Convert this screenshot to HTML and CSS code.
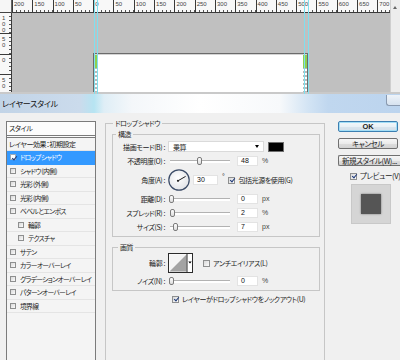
FILE: index.html
```html
<!DOCTYPE html>
<html lang="ja">
<head>
<meta charset="utf-8">
<title>レイヤースタイル</title>
<link rel="stylesheet" href="styles.css">
</head>
<body>
<div class="ws">
  <div class="corner"></div>
  <div class="hruler">
    <span class="seg">200</span><span class="seg">150</span><span class="seg">100</span><span class="seg">50</span><span class="seg">0</span><span class="seg">50</span><span class="seg">100</span><span class="seg">150</span><span class="seg">200</span><span class="seg">250</span><span class="seg">300</span><span class="seg">350</span><span class="seg">400</span><span class="seg">450</span><span class="seg">500</span><span class="seg">550</span><span class="seg">600</span><span class="seg">650</span><span class="seg">700</span>
  </div>
  <div class="vscroll"><span class="arrow-up"></span></div>
  <div class="vruler">
    <span class="vseg"><i>1</i><i>0</i><i>0</i></span>
    <span class="vseg"><i>5</i><i>0</i></span>
    <span class="vseg"><i>0</i></span>
    <span class="vseg"><i>5</i><i>0</i></span>
  </div>
  <div class="canvas">
    <div class="doc">
      <span class="mark mark-l"></span>
      <span class="mark mark-r"></span>
    </div>
  </div>
  <span class="guide g1"></span>
  <span class="guide g2"></span>
  <span class="guide g3"></span>
  <span class="guide g4"></span>
</div>

<div class="titlebar">
  <span class="title">レイヤースタイル</span>
  <span class="close"></span>
</div>

<div class="dialog">
  <div class="styles">
    <div class="list">
      <div class="lhead">スタイル</div>
      <div class="lrow lplain">レイヤー効果：初期設定</div>
      <div class="lrow sel"><span class="cb on"></span><span>ドロップシャドウ</span></div>
      <div class="lrow"><span class="cb"></span><span>シャドウ (内側)</span></div>
      <div class="lrow"><span class="cb"></span><span>光彩 (外側)</span></div>
      <div class="lrow"><span class="cb"></span><span>光彩 (内側)</span></div>
      <div class="lrow"><span class="cb"></span><span>ベベルとエンボス</span></div>
      <div class="lrow ind"><span class="cb"></span><span>輪郭</span></div>
      <div class="lrow ind"><span class="cb"></span><span>テクスチャ</span></div>
      <div class="lrow"><span class="cb"></span><span>サテン</span></div>
      <div class="lrow"><span class="cb"></span><span>カラーオーバーレイ</span></div>
      <div class="lrow"><span class="cb"></span><span>グラデーションオーバーレイ</span></div>
      <div class="lrow"><span class="cb"></span><span>パターンオーバーレイ</span></div>
      <div class="lrow"><span class="cb"></span><span>境界線</span></div>
    </div>
  </div>

  <div class="main">
    <fieldset class="grp outer">
      <legend>ドロップシャドウ</legend>
      <fieldset class="grp inner struct">
        <legend>構造</legend>
        <div class="row r1">
          <span class="lbl">描画モード(B) :</span>
          <span class="select"><span>乗算</span><span class="caret"></span></span>
          <span class="swatch"></span>
        </div>
        <div class="row r2">
          <span class="lbl">不透明度(O) :</span>
          <span class="slider"><span class="thumb" style="left:29px"></span></span>
          <span class="field">48</span><span class="unit">%</span>
        </div>
        <div class="row r3">
          <span class="lbl">角度(A) :</span>
          <span class="dial">
            <svg width="22" height="22" viewBox="0 0 22 22">
              <defs>
                <radialGradient id="dg" cx="45%" cy="40%" r="60%">
                  <stop offset="0" stop-color="#ffffff"/>
                  <stop offset="1" stop-color="#e2e4e8"/>
                </radialGradient>
              </defs>
              <circle cx="11" cy="11" r="10.2" fill="url(#dg)" stroke="#3a4a66" stroke-width="1.2"/>
              <line x1="10.5" y1="11.5" x2="17.6" y2="7.4" stroke="#1e1e1e" stroke-width="1"/>
              <circle cx="10" cy="11.8" r="1.1" fill="#1e1e1e"/>
            </svg>
          </span>
          <span class="field wide">30</span><span class="deg">°</span>
          <span class="cb on cb-g"></span><span class="txt">包括光源を使用(G)</span>
        </div>
        <div class="row r4">
          <span class="lbl">距離(D) :</span>
          <span class="slider"><span class="thumb" style="left:1px"></span></span>
          <span class="field">0</span><span class="unit">px</span>
        </div>
        <div class="row r5">
          <span class="lbl">スプレッド(R) :</span>
          <span class="slider"><span class="thumb" style="left:2px"></span></span>
          <span class="field">2</span><span class="unit">%</span>
        </div>
        <div class="row r6">
          <span class="lbl">サイズ(S) :</span>
          <span class="slider"><span class="thumb" style="left:5px"></span></span>
          <span class="field">7</span><span class="unit">px</span>
        </div>
      </fieldset>

      <fieldset class="grp inner quality">
        <legend>画質</legend>
        <div class="row rc">
          <span class="lbl">輪郭 :</span>
          <span class="contour">
            <svg width="25" height="20" viewBox="0 0 25 20">
              <rect x="0.5" y="0.5" width="24" height="19" fill="#ffffff" stroke="#2b2b2b"/>
              <rect x="1.5" y="1.5" width="17" height="17" fill="#f4f4f4"/>
              <polygon points="1.5,18.5 18.5,1.5 18.5,18.5" fill="#a3a3a3"/>
              <line x1="19" y1="1" x2="19" y2="19" stroke="#2b2b2b"/>
              <polygon points="20.3,8.5 23.7,8.5 22,10.5" fill="#000"/>
            </svg>
          </span>
          <span class="cb cb-aa"></span><span class="txt">アンチエイリアス(L)</span>
        </div>
        <div class="row rn">
          <span class="lbl">ノイズ(N) :</span>
          <span class="slider"><span class="thumb" style="left:1px"></span></span>
          <span class="field">0</span><span class="unit">%</span>
        </div>
      </fieldset>

      <div class="knock"><span class="cb on"></span><span class="txt">レイヤーがドロップシャドウをノックアウト(U)</span></div>
    </fieldset>
  </div>

  <div class="side">
    <div class="btn ok">OK</div>
    <div class="btn cancel">キャンセル</div>
    <div class="btn new">新規スタイル(W)...</div>
    <div class="prevchk"><span class="cb on"></span><span class="txt">プレビュー(V)</span></div>
    <div class="preview"><span class="sq"></span></div>
  </div>
</div>
</body>
</html>
```

FILE: styles.css
```css
* { box-sizing: border-box; }
html, body { margin: 0; padding: 0; }
body {
  width: 400px;
  height: 360px;
  overflow: hidden;
  background: #f0f0f0;
  font-family: "Noto Sans CJK JP", "Noto Sans", sans-serif;
  font-feature-settings: "palt";
  font-size: 7px;
  letter-spacing: -0.4px;
  line-height: 10px;
  color: #1e1e1e;
}

/* ---------- workspace ---------- */
.ws {
  position: relative;
  display: grid;
  grid-template-columns: 12px 378px 10px;
  grid-template-rows: 13px 79px;
  height: 94px;
  border-bottom: 2px solid #c9c9c9;
  background: #c0c0c0;
  letter-spacing: 0;
}
.corner {
  background: #f6f6f6;
  border-right: 1px solid #666;
  border-bottom: 1px solid #444;
}
.hruler {
  display: flex;
  overflow: hidden;
  background: #f8f8f8;
  border-bottom: 1px solid #3a3a3a;
}
.seg {
  flex: 0 0 20.3px;
  border-left: 1px solid #3a3a3a;
  padding-left: 1px;
  font-family: "Liberation Sans", sans-serif;
  font-size: 6px;
  line-height: 9px;
  color: #444;
  background: repeating-linear-gradient(90deg, transparent 0 3.06px, #555 3.06px 4.06px) left bottom / 100% 2px no-repeat;
}
.vscroll {
  grid-column: 3;
  grid-row: 1 / 3;
  background: #ededed;
  border-left: 1px solid #cfcfcf;
  position: relative;
}
.arrow-up {
  position: absolute;
  left: 2px;
  top: 6px;
  border-left: 2.5px solid transparent;
  border-right: 2.5px solid transparent;
  border-bottom: 3px solid #666;
}
.vruler {
  display: flex;
  flex-direction: column;
  overflow: hidden;
  background: #f8f8f8;
  border-right: 1px solid #3a3a3a;
}
.vseg {
  flex: 0 0 20.5px;
  display: flex;
  flex-direction: column;
  border-top: 1px solid #3a3a3a;
  padding: 2px 0 0 2px;
  font-family: "Liberation Sans", sans-serif;
  font-size: 6px;
  line-height: 6px;
  color: #444;
  background: repeating-linear-gradient(180deg, transparent 0 3.1px, #555 3.1px 4.1px) right top / 2px 100% no-repeat;
}
.vseg:first-child { margin-top: -1px; }
.vseg i { font-style: normal; }
.canvas {
  position: relative;
  overflow: hidden;
  background: #c0c0c0;
}
.doc {
  position: absolute;
  left: 81px;
  top: 40px;
  width: 215px;
  height: 39px;
  background: #fff;
  border: 1px solid #6b6b6b;
  border-bottom: 0;
  box-shadow: inset 0 1px 0 #d4d4d4;
}
.mark {
  position: absolute;
  top: 1px;
  bottom: 0;
  width: 3px;
  background:
    linear-gradient(#8fd14f 0 13px, transparent 13px),
    repeating-linear-gradient(#b9b9b9 0 2px, #fff 2px 4px);
}
.mark-l { left: 0; }
.mark-r { right: 0; width: 4px; }
.guide {
  position: absolute;
  top: 0;
  height: 94px;
  width: 1px;
  background: #7fe0ef;
}
.g1 { left: 94px; }
.g2 { left: 97px; }
.g3 { left: 304px; }
.g4 { left: 308px; }

/* ---------- title bar ---------- */
.titlebar {
  height: 19px;
  display: flex;
  align-items: center;
  justify-content: space-between;
  padding-left: 2px;
  background: linear-gradient(90deg, #c2d4e7 0, #cbdbec 20%, #b6e4f2 23.5%, #dfeef6 26%, #f4f7fa 33%, #ffffff 50%, #f7f9fb 70%, #d3e4f4 77%, #c0d7ef 82%, #bcd4ee 100%);
  font-size: 8px;
  letter-spacing: -0.2px;
  color: #111;
}
.close {
  align-self: flex-start;
  width: 14px;
  height: 11px;
  margin-top: 1px;
  border: 1px solid #8a9ab0;
  border-right: 0;
  border-top: 0;
  border-radius: 0 0 0 3px;
  background: linear-gradient(#eef3f9, #d6e2ef);
}

/* ---------- dialog ---------- */
.dialog {
  display: flex;
  height: 247px;
  overflow: hidden;
  padding: 8px 0 0 6px;
}
.styles { flex: 0 0 90px; min-width: 0; }
.list {
  height: 239px;
  overflow: hidden;
  border: 1px solid #7b7b7b;
  border-bottom: 0;
  background: #f4f4f4;
}
.lhead {
  height: 16px;
  padding-left: 2px;
  line-height: 13px;
  background: #fcfcfc;
  border-bottom: 3px double #7a7a7a;
}
.lrow {
  height: 13.5px;
  display: flex;
  align-items: center;
  gap: 4px;
  padding-left: 3px;
  border-bottom: 1px solid #e4e4e4;
  white-space: nowrap;
  font-size: 6.8px;
  letter-spacing: -0.7px;
}
.lplain { height: 13px; padding-left: 2px; font-size: 7px; letter-spacing: -0.4px; }
.lrow.sel { background: #3399ff; color: #fff; border-bottom-color: #3399ff; }
.lrow.ind { padding-left: 11px; }
.lrow .cb { width: 6px; height: 6px; }
.lrow.sel .cb { background: #fff; border-color: #9ab; }

.cb {
  position: relative;
  flex: none;
  width: 7px;
  height: 7px;
  border: 1px solid #8e8f8f;
  background: linear-gradient(135deg, #d9d9d9, #fbfbfb);
}
.cb.on::after {
  content: "";
  position: absolute;
  left: 1.5px;
  top: -0.5px;
  width: 2px;
  height: 4px;
  border: solid #1f3a7a;
  border-width: 0 1.2px 1.2px 0;
  transform: rotate(40deg);
}

/* group boxes */
.main { flex: 0 0 220px; min-width: 0; margin-left: 9px; margin-top: -3px; }
.grp {
  margin: 0;
  min-width: 0;
  border: 1px solid #c6c6c6;
}
.grp legend {
  padding: 0 2px;
  height: 10px;
  line-height: 10px;
  font-size: 7px;
}
.outer {
  width: 220px;
  height: 242px;
  padding: 0 5px 0 6px;
  border-bottom: 0;
}
.outer > legend { margin-left: 1px; }
.inner { width: 208px; padding: 2px 0 4px 0; }
.struct { margin-top: 1px; }
.struct > legend { margin-left: 3px; }
.quality { margin-top: 5px; padding-top: 1px; }
.quality > legend { margin-left: 5px; }

.row {
  display: flex;
  align-items: center;
  height: 10px;
  white-space: nowrap;
}
.r1 { height: 11px; }
.r2 { margin-top: 4px; }
.r3 { margin-top: 3px; height: 22px; }
.r4 { margin-top: 3px; }
.r5, .r6 { margin-top: 4px; }
.rc { height: 20px; }
.rn { margin-top: 3px; }

.lbl {
  flex: 0 0 52px;
  text-align: right;
  color: #222;
}
.select {
  display: flex;
  align-items: center;
  flex: none;
  width: 96px;
  height: 11px;
  margin-left: 3px;
  padding-left: 4px;
  background: #fff;
  border: 1px solid #dadada;
}
.caret {
  margin-left: auto;
  margin-right: 4px;
  border-top: 3px solid #000;
  border-left: 2.5px solid transparent;
  border-right: 2.5px solid transparent;
}
.swatch {
  flex: none;
  width: 16px;
  height: 10px;
  margin-left: 4px;
  background: #000;
  border: 1px solid #6e6e6e;
}
.slider {
  position: relative;
  flex: none;
  width: 62px;
  height: 10px;
  margin-left: 3px;
}
.slider::before {
  content: "";
  position: absolute;
  left: 2px;
  right: 0;
  top: 4px;
  height: 2px;
  border-top: 1px solid #b2b2b2;
  background: #fff;
}
.thumb {
  position: absolute;
  top: 1px;
  width: 5px;
  height: 8px;
  border: 1px solid #7c7c7c;
  border-radius: 2px;
  background: linear-gradient(#fdfdfd, #dcdcdc);
}
.field {
  flex: none;
  width: 21px;
  height: 10px;
  margin-left: 7px;
  padding-left: 3px;
  background: #fff;
  border: 1px solid #e3e3e3;
  font-family: "Liberation Sans", sans-serif;
  font-size: 7px;
  letter-spacing: 0;
  line-height: 8px;
  color: #111;
}
.field.wide { width: 25px; margin-left: 3px; }
.unit {
  margin-left: 4px;
  font-family: "Liberation Sans", sans-serif;
  font-size: 7px;
  letter-spacing: 0;
  color: #444;
}
.dial { flex: none; width: 22px; height: 22px; margin-left: 3px; }
.dial svg, .contour svg { display: block; }
.deg {
  align-self: flex-start;
  margin-top: 4px;
  margin-left: 4px;
  font-family: "Liberation Sans", sans-serif;
  font-size: 7px;
  line-height: 7px;
}
.cb-g { margin-left: 4px; }
.txt { margin-left: 3px; }
.contour { flex: none; width: 25px; height: 20px; margin-left: 3px; }
.cb-aa { margin-left: 10px; }
.knock {
  display: flex;
  align-items: center;
  height: 10px;
  margin-top: 3px;
  padding-left: 60px;
  white-space: nowrap;
}

/* right column */
.side {
  flex: 0 0 62px;
  margin-left: 13px;
}
.btn {
  width: 60px;
  height: 11px;
  border: 1px solid #707070;
  border-radius: 2px;
  background: linear-gradient(#f6f6f6 0, #ebebeb 50%, #dddddd 51%, #d3d3d3 100%);
  text-align: center;
  line-height: 9px;
  font-size: 7.5px;
  white-space: nowrap;
}
.ok {
  border-color: #3c7fb1;
  box-shadow: inset 0 0 0 1px #a3def6;
  background: linear-gradient(#f3f8fb 0, #e9f1f6 50%, #dbe6ee 51%, #d2dfe9 100%);
  font-family: "Liberation Sans", sans-serif;
  font-weight: bold;
  letter-spacing: 0;
}
.cancel { margin-top: 6px; }
.new { margin-top: 6px; width: 62px; text-align: left; padding-left: 3px; border-right-width: 0; border-radius: 2px 0 0 2px; }
.prevchk {
  display: flex;
  align-items: center;
  height: 10px;
  margin-top: 5px;
  padding-left: 12px;
  font-size: 7.5px;
  white-space: nowrap;
}
.preview {
  display: flex;
  align-items: center;
  justify-content: center;
  width: 40px;
  height: 40px;
  margin-top: 3px;
  margin-left: 13px;
  background: #d5d5d5;
  border: 1px solid #c8c8c8;
}
.sq {
  width: 20px;
  height: 20px;
  background: #555;
  box-shadow: 0 0 2px #777;
}
```
